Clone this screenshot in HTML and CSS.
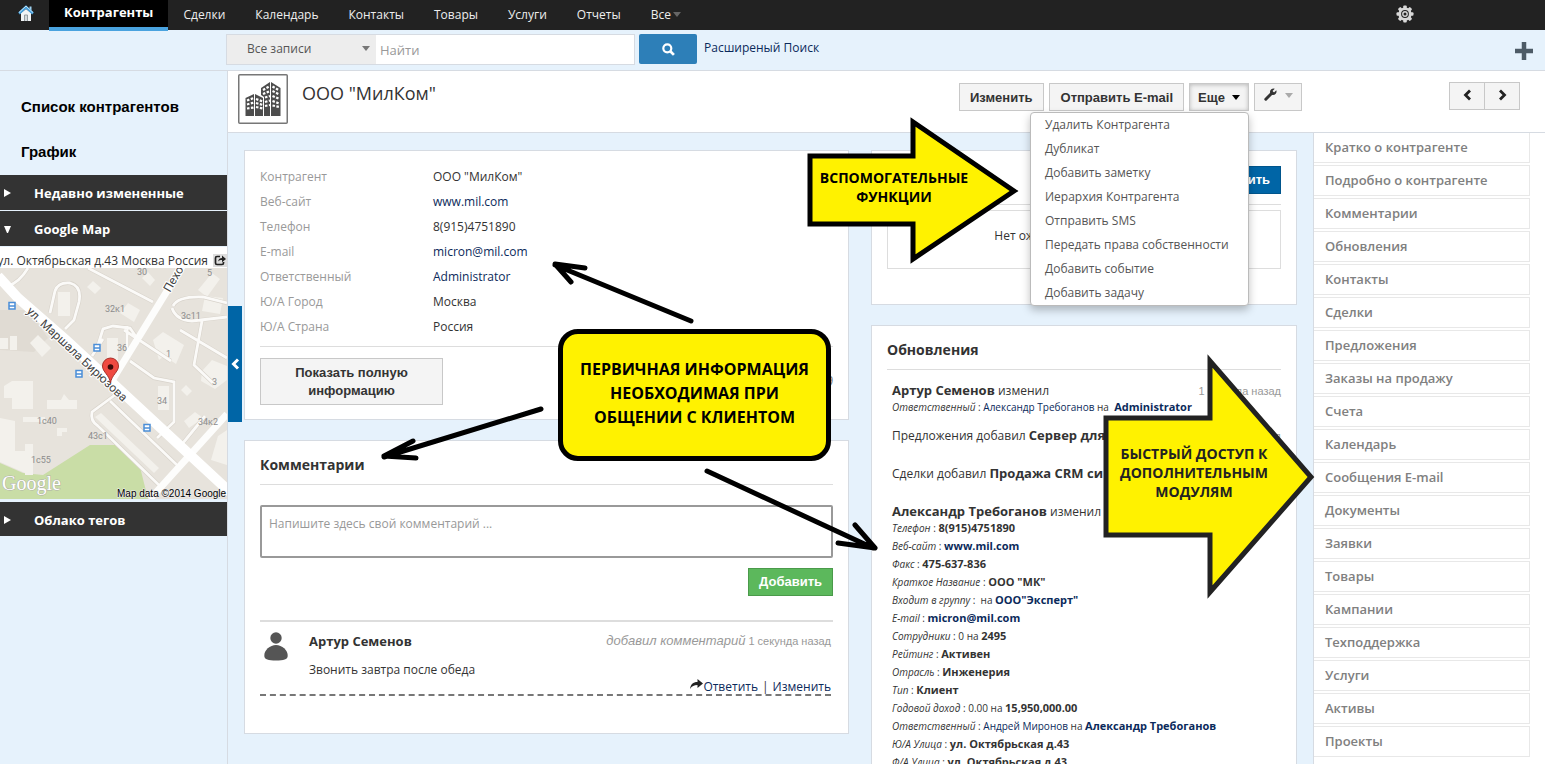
FILE: index.html
```html
<!DOCTYPE html>
<html lang="ru">
<head>
<meta charset="utf-8">
<title>ООО "МилКом"</title>
<link rel="stylesheet" href="styles.css">
</head>
<body>
<nav class="topnav">
  <a class="home" href="#" aria-label="Главная"><svg width="16" height="17" viewBox="0 0 16 17"><path d="M3 8v8h10V8L8 4z" fill="#f1f4f6"/><path d="M11.500 1.500h2v4h-2z" fill="#9ed0ee"/><path d="M1 8.500l7-6.500 7 6.500" fill="none" stroke="#4aa3df" stroke-width="2.400"/><path d="M1 7.500l7-6.500 7 6.500" fill="none" stroke="#bfe2f7" stroke-width="1"/><path d="M6.500 16v-6h3v6" fill="#d5dadd" stroke="#8b949a" stroke-width=".9"/></svg></a>
  <a class="active" href="#">Контрагенты</a>
  <a href="#">Сделки</a><a href="#">Календарь</a><a href="#">Контакты</a><a href="#">Товары</a><a href="#">Услуги</a><a href="#">Отчеты</a>
  <a href="#">Все<i class="caret dim"></i></a>
  <button class="gear" aria-label="Настройки"><svg width="18" height="18" viewBox="-9 -9 18 18"><g fill="#d8d8d8"><rect x="-1.800" y="-8.500" width="3.600" height="17" rx="1"/><rect x="-8.500" y="-1.800" width="17" height="3.600" rx="1"/><rect x="-1.800" y="-8.500" width="3.600" height="17" rx="1" transform="rotate(45)"/><rect x="-1.800" y="-8.500" width="3.600" height="17" rx="1" transform="rotate(-45)"/><circle r="6.600"/></g><circle r="3.900" fill="#222"/><circle r="2.900" fill="#d8d8d8"/><circle r="1.500" fill="#222"/></svg></button>
</nav>
<form class="search">
  <label class="scope"><select aria-label="Область поиска"><option>Все записи</option></select><i class="caret"></i></label>
  <input type="text" placeholder="Найти" aria-label="Найти">
  <button type="button" class="find" aria-label="Искать"><svg width="13" height="13" viewBox="0 0 13 13" fill="none" stroke="#fff"><circle cx="5.300" cy="5.300" r="4" stroke-width="2.200"/><path d="M8.300 8.300l3.600 3.600" stroke-width="2.700"/></svg></button>
  <a href="#">Расширеный Поиск</a>
  <button type="button" class="plus" aria-label="Создать"><svg width="18" height="18" viewBox="0 0 18 18"><path d="M9 0v18M0 9h18" stroke="#4d5b66" stroke-width="4.500"/></svg></button>
</form>
<div class="layout">
  <aside class="sidebar">
    <a class="quick" href="#">Список контрагентов</a>
    <a class="quick" href="#">График</a>
    <button class="fold"><i class="tri"></i>Недавно измененные</button>
    <button class="fold"><i class="tri down"></i>Google Map</button>
    <div class="address"><span>ул. Октябрьская д.43 Москва Россия</span><svg width="14" height="13" viewBox="0 0 14 13"><rect width="14" height="13" fill="#ddd"/><path d="M7 2.500H4Q2.500 2.500 2.500 4v5q0 1.500 1.500 1.500h5q1.500 0 1.500-1.500V8" fill="none" stroke="#222" stroke-width="1.700"/><path d="M5 7.500C5.500 5 7 4 9 4V1.500L13 5 9 8.200V6C7.500 6 6 6.300 5 7.500z" fill="#222"/></svg></div>
    <svg class="map" viewBox="0 0 227 231" preserveAspectRatio="xMidYMid slice">
      <rect width="227" height="231" fill="#e7e3dc"/>
      <path d="M0 42h28l20 28-14 14L0 82z" fill="#e0dbd3"/>
      <path d="M0 195l23 10 20 2 47-30h25l25 22 8 32H0z" fill="#c9dda6"/>
      <g fill="#f3f1ec">
        <path d="M58 24h12v24H58zM87 19l6-6 8 7-6 6zM120 45l8-10 12 7-6 12zM142 10l6-6 7 8-5 6zM198 22l14-17 8 6-13 18zM205 28l18 2-3 16-18-3z"/>
        <path d="M107 70h11v24h-11zM30 75l8-8 13 13-9 9zM10 68h7v14h-7zM0 70h8v11H0zM4 118l8-5h21v28H12v-11H4zM47 132h14l3-6 5 6h8v9H47zM23 149h22v5H23zM57 160h10v4h-5v4h-5zM0 150l15 3v30h10v22L0 194zM25 176h8v31h-8z"/>
        <path d="M153 72l10-8 21 13-8 19-12-8-5 4zM202 103l10-11 15 6v14l-12 9-14-8zM158 118h11v24h-11zM181 122l5-5 6 6-5 5zM184 153l11-9 8 6-14 10zM95 149l6-4 58 55-5 5zM218 168l9-6v35l-16-5z"/>
      </g>
      <g fill="none" stroke="#d8d3cb" stroke-width="4">
        <path d="M28 0C22 10 14 16 8 18M50 45l5-22q3-9 15-8 12 3 9 19l-5 18-9 9M88 0l65 34M98 77l5-16 10-3 17 2 9 13M127 58v34M92 88l11-17M130 93l24 17 20 4v40l-17 16M227 90l-47-28M172 40q4 12 20 13l35-4M173 38q5-10 30-9l24 6M202 53l-8 44 20 19M124 62l47 31"/>
        <path d="M119 124l-27 20q-2 9 6 14l64 62M110 133l67 64M183 175l22-27"/>
      </g>
      <g fill="none" stroke="#fbfaf8" stroke-width="2.800">
        <path d="M28 0C22 10 14 16 8 18M50 45l5-22q3-9 15-8 12 3 9 19l-5 18-9 9M88 0l65 34M98 77l5-16 10-3 17 2 9 13M127 58v34M92 88l11-17M130 93l24 17 20 4v40l-17 16M227 90l-47-28M172 40q4 12 20 13l35-4M173 38q5-10 30-9l24 6M202 53l-8 44 20 19M124 62l47 31"/>
        <path d="M119 124l-27 20q-2 9 6 14l64 62M110 133l67 64M183 175l22-27"/>
      </g>
      <path d="M183-3L137 72l-24 39M227 146l-67 74-10 11" fill="none" stroke="#fdfdfc" stroke-width="7"/>
      <path d="M-2 8l20 22 48 42 124 115 40 37" fill="none" stroke="#fff" stroke-width="10"/>
      <g fill="#fff" stroke="#4b8ed8" stroke-width="1.500"><path d="M9 34.500h6v6.500H9zM94 76.500h6V83h-6zM76 102.500h6v6.500h-6zM144 156.500h6v6.500h-6z"/><path d="M9 38h6M94 80h6M76 106h6M144 160h6"/></g>
      <g class="houses"><text x="137" y="7">30</text><text x="207" y="8">5</text><text x="105" y="44">32к1</text><text x="181" y="51">3с11</text><text x="117" y="83">36</text><text x="166" y="89">1</text><text x="212" y="117">3</text><text x="157" y="136">34</text><text x="198" y="157">34к2</text><text x="37" y="156">1с40</text><text x="88" y="171">43с1</text><text x="31" y="195">1с55</text></g>
      <text class="street" transform="translate(26 44) rotate(43)">ул. Маршала Бирюзова</text>
      <text class="street" transform="translate(170 25) rotate(-60)">Пехо</text>
      <path d="M110.500 115c-1-8-8-11-8-17a8 8 0 0 1 16 0c0 6-7 9-8 17z" fill="#ef4a41" stroke="#a8322b"/><circle cx="110.500" cy="99" r="2.800" fill="#3d0b09"/>
      <text class="glogo" x="2" y="222">Google</text>
      <text class="credit" x="117" y="229">Map data ©2014 Google</text>
    </svg>
    <button class="fold last"><i class="tri"></i>Облако тегов</button>
  </aside>
  <div class="page">
    <button class="toggle" aria-label="Свернуть"><svg width="9" height="12" viewBox="0 0 9 12"><path d="M7 1.500L2.500 6 7 10.500" fill="none" stroke="#fff" stroke-width="3"/></svg></button>
    <header class="record">
      <svg class="logo" width="50" height="50" viewBox="0 0 50 50"><rect x=".75" y=".75" width="48.500" height="48.500" rx="1" fill="#fff" stroke="#777" stroke-width="1.500"/><g fill="#4d4d4d"><path d="M7.500 24l8.500-4v22H7.500zM17 20l8 4v18h-8zM23 14l9-6v34h-6V23l-3-2zM33 8l9.500 6v28H33z"/></g><g fill="none" stroke="#fff" stroke-width="2.200" stroke-dasharray="2.500 1.500"><path d="M9 26.500l7-2.500M9 30.500l7-2M9 34.500l7-1M18 25l7 2.500M18 29l7 2M18 33l7 1.500M25 16l7-4M25 20l7-3M27 23.500l5-1.500M27 28l5-1.500M27 32l5-1M34.500 12.500l7 4M34.500 17l7 3.500M34.500 22l7 3M34.500 27l7 2.500M34.500 31.500l7 1.500"/></g></svg>
      <h1>ООО "МилКом"</h1>
      <div class="actions">
        <button class="btn">Изменить</button>
        <button class="btn">Отправить E-mail</button>
        <div class="more">
          <button class="btn pressed">Еще<i class="caret"></i></button>
          <ul class="menu"><li><a href="#">Удалить Контрагента</a></li><li><a href="#">Дубликат</a></li><li><a href="#">Добавить заметку</a></li><li><a href="#">Иерархия Контрагента</a></li><li><a href="#">Отправить SMS</a></li><li><a href="#">Передать права собственности</a></li><li><a href="#">Добавить событие</a></li><li><a href="#">Добавить задачу</a></li></ul>
        </div>
        <button class="btn tool" aria-label="Инструменты"><svg width="13" height="13" viewBox="0 0 13 13"><path d="M1.800 11.200L8 5" stroke="#333" stroke-width="3" stroke-linecap="round"/><path d="M12.300 2.200L10 4.500 8.500 3 10.800.7A3.600 3.600 0 0 0 6 4.600L8.400 7a3.600 3.600 0 0 0 3.900-4.800z" fill="#333"/></svg><i class="caret dim"></i></button>
      </div>
      <div class="pager"><button aria-label="Назад"><svg width="9" height="12" viewBox="0 0 9 12"><path d="M7 1.500L2.500 6 7 10.500" fill="none" stroke="#222" stroke-width="2.800"/></svg></button><button aria-label="Вперед"><svg width="9" height="12" viewBox="0 0 9 12"><path d="M2 1.500L6.500 6 2 10.500" fill="none" stroke="#222" stroke-width="2.800"/></svg></button></div>
    </header>
    <div class="body">
      <main class="content">
        <div class="col">
          <section class="panel summary">
            <dl><dt>Контрагент</dt><dd>ООО "МилКом"</dd><dt>Веб-сайт</dt><dd><a href="#">www.mil.com</a></dd><dt>Телефон</dt><dd>8(915)4751890</dd><dt>E-mail</dt><dd><a href="#">micron@mil.com</a></dd><dt>Ответственный</dt><dd><a href="#">Administrator</a></dd><dt>Ю/А Город</dt><dd>Москва</dd><dt>Ю/А Страна</dt><dd>Россия</dd></dl>
            <div class="full"><button class="btn">Показать полную информацию</button><em>д</em></div>
          </section>
          <section class="panel comments">
            <h2>Комментарии</h2>
            <textarea placeholder="Напишите здесь свой комментарий ..." aria-label="Комментарий"></textarea>
            <div class="submit"><button class="add">Добавить</button></div>
            <article class="comment">
              <svg width="24" height="29" viewBox="0 0 24 29" fill="#555"><circle cx="12" cy="6" r="5.700"/><path d="M12 13c6 0 12 5 11.700 11-.2 3.500-4 4.500-11.700 4.500S.5 27.500.3 24C0 18 6 13 12 13z"/></svg>
              <div class="text"><div class="line"><b>Артур Семенов</b><span class="when"><em>добавил комментарий</em> 1 секунда назад</span></div>
              <p>Звонить завтра после обеда</p></div>
            </article>
            <div class="reply"><svg width="13" height="10" viewBox="0 0 13 10"><path d="M0 10C.5 5.500 3 3 7.500 3V0L13 4.500 7.500 9V6C4 6 2 7 0 10z" fill="#222"/></svg><a href="#">Ответить</a><span>|</span><a href="#">Изменить</a></div>
          </section>
        </div>
        <div class="col">
          <section class="panel events">
            <div class="bar"><button class="primary">Добавить</button></div>
            <p class="empty">Нет ожидающих мероприятий</p>
          </section>
          <section class="panel updates">
            <h2>Обновления</h2>
            <ul>
              <li><div class="line"><span><b>Артур Семенов</b> изменил</span><time>1 секунда назад</time></div>
                <p><i>Ответственный</i> : <a href="#">Александр Требоганов</a> на &nbsp;<a href="#"><b>Administrator</b></a></p></li>
              <li><div class="line"><span>Предложения добавил <b>Сервер для</b></span><time>назад</time></div></li>
              <li><div class="line"><span>Сделки добавил <b>Продажа CRM си</b></span></div></li>
              <li><div class="line"><span><b>Александр Требоганов</b> изменил</span></div>
                <p><i>Телефон</i> : <b>8(915)4751890</b></p>
                <p><i>Веб-сайт</i> : <a href="#"><b>www.mil.com</b></a></p>
                <p><i>Факс</i> : <b>475-637-836</b></p>
                <p><i>Краткое Название</i> : <b>ООО "МК"</b></p>
                <p><i>Входит в группу</i> : &nbsp;на <a href="#"><b>ООО"Эксперт"</b></a></p>
                <p><i>E-mail</i> : <a href="#"><b>micron@mil.com</b></a></p>
                <p><i>Сотрудники</i> : 0 на <b>2495</b></p>
                <p><i>Рейтинг</i> : <b>Активен</b></p>
                <p><i>Отрасль</i> : <b>Инженерия</b></p>
                <p><i>Тип</i> : <b>Клиент</b></p>
                <p><i>Годовой доход</i> : 0.00 на <b>15,950,000.00</b></p>
                <p><i>Ответственный</i> : <a href="#">Андрей Миронов</a> на <a href="#"><b>Александр Требоганов</b></a></p>
                <p><i>Ю/А Улица</i> : <b>ул. Октябрьская д.43</b></p>
                <p><i>Ф/А Улица</i> : <b>ул. Октябрьская д.43</b></p></li>
            </ul>
          </section>
        </div>
      </main>
      <nav class="related"><a href="#">Кратко о контрагенте</a><a href="#">Подробно о контрагенте</a><a href="#">Комментарии</a><a href="#">Обновления</a><a href="#">Контакты</a><a href="#">Сделки</a><a href="#">Предложения</a><a href="#">Заказы на продажу</a><a href="#">Счета</a><a href="#">Календарь</a><a href="#">Сообщения E-mail</a><a href="#">Документы</a><a href="#">Заявки</a><a href="#">Товары</a><a href="#">Кампании</a><a href="#">Техподдержка</a><a href="#">Услуги</a><a href="#">Активы</a><a href="#">Проекты</a></nav>
    </div>
  </div>
</div>
<svg class="pointers" width="1545" height="764" viewBox="0 0 1545 764">
  <g fill="none" stroke="#000" stroke-width="5" stroke-linecap="round" stroke-linejoin="round"><path d="M691 321L555 265M585 268l-30-4 16 18M541 409L384 457M413 441l-29 15 32 2M707 471l166 77M855 525l20 23-37-5"/></g>
  <path d="M810 156h103v-34l101 69-101 68v-35H810z" fill="#fff200" stroke="#000" stroke-width="5"/>
  <path d="M1106 418h104v-57l101 116-101 115v-57h-104z" fill="#fff200" stroke="#222" stroke-width="5"/>
</svg>
<div class="note helpers">ВСПОМОГАТЕЛЬНЫЕ ФУНКЦИИ</div>
<div class="note primary-info">ПЕРВИЧНАЯ ИНФОРМАЦИЯ НЕОБХОДИМАЯ ПРИ ОБЩЕНИИ С КЛИЕНТОМ</div>
<div class="note modules">БЫСТРЫЙ ДОСТУП К ДОПОЛНИТЕЛЬНЫМ <span>МОДУЛЯМ</span></div>
</body>
</html>
```
FILE: styles.css
```css
* { box-sizing: border-box; }
body {
  margin: 0;
  height: 100vh;
  overflow: hidden;
  position: relative;
  display: flex;
  flex-direction: column;
  background: #e6f2fc;
  color: #333;
  font: 12px/18px "Open Sans", "Noto Sans", sans-serif;
}
a { color: #0b2a5b; text-decoration: none; }
button { font: inherit; cursor: pointer; }
h1, h2, p, ul, dl, dd { margin: 0; padding: 0; }
ul { list-style: none; }
svg { flex: none; }

.caret { display: inline-block; border: 4px solid transparent; border-top: 5px solid #000; border-bottom: 0; }
.caret.dim { border-top-color: #777; }

.topnav { display: flex; flex: none; height: 30px; background: #222; }
.topnav a { padding: 6px 15px 0; color: #eee; }
.topnav .home { width: 49px; padding: 5px 0 0 18px; }
.topnav .active { height: 31px; padding-top: 3px; background: #000; border-bottom: 4px solid #4aa3df; color: #fff; font-weight: 700; font-size: 13px; }
.topnav .caret { margin-left: 2px; vertical-align: 2px; }
.topnav .caret.dim { border-top-color: #666; }
.gear { display: flex; align-items: center; margin: 0 131px 2px auto; padding: 0; border: 0; background: none; }

.search { display: flex; flex: none; height: 41px; padding: 4px 12px 0 226px; border-bottom: 1px solid #d6dbe2; margin: 0; align-items: flex-start; }
.scope { position: relative; width: 150px; }
.scope select { appearance: none; width: 100%; height: 31px; padding: 0 20px 2px; background: #ededed; border: 1px solid #d6dbe2; border-right: 0; border-radius: 0; color: #555; font: inherit; }
.scope .caret { position: absolute; right: 6px; top: 12px; border-top-color: #777; }
.search input { width: 259px; height: 31px; padding: 0 4px; border: 1px solid #d6dbe2; border-left: 0; font: inherit; font-size: 13px; }
::placeholder { color: #999; opacity: 1; }
.find { display: flex; align-items: center; justify-content: center; width: 58px; height: 30px; margin: 0 7px 0 4px; border: 0; border-radius: 2px; background: #2d7fb8; }
.search a { padding-top: 5px; }
.plus { display: flex; margin: 8px 0 0 auto; padding: 0; border: 0; background: none; }

.layout { display: flex; flex: 1; min-height: 0; }
.sidebar { width: 228px; flex: none; border-right: 1px solid #d6dbe2; padding-top: 14px; }
.quick { display: block; padding: 13px 21px 14px; color: #000; font: bold 15px/18px "Liberation Sans", Arial, sans-serif; }
.fold { display: flex; align-items: center; width: 100%; height: 35px; margin: 0 0 1px; padding: 1px 0 0 4px; border: 0; background: #333; color: #fff; font-weight: 700; font-size: 13px; }
.fold.last { height: 34px; margin-top: 3px; }
.tri { width: 7px; margin-right: 23px; border: 4px solid transparent; border-left: 7px solid #fff; border-right: 0; }
.tri.down { border: 3px solid transparent; border-top: 7px solid #fff; border-bottom: 0; }
.address { display: flex; align-items: center; justify-content: flex-end; gap: 5px; height: 21px; background: #fff; white-space: nowrap; padding-top: 6px; }
.map { display: block; width: 100%; height: 231px; }
.houses text { font: 9px Roboto, sans-serif; fill: #8c8c8c; }
.street { font: 12px Roboto, sans-serif; fill: #444; stroke: #fff; stroke-width: 2px; paint-order: stroke; }
.glogo { font: 20px "Liberation Serif", serif; fill: #fff; stroke: #b0b0a8; stroke-width: 1px; paint-order: stroke; }
.credit { font: 10px "Liberation Sans", sans-serif; fill: #000; stroke: #eee; stroke-width: 1px; paint-order: stroke; }

.page { position: relative; flex: 1; min-width: 0; display: flex; flex-direction: column; }
.toggle { position: absolute; left: 0; top: 235px; width: 14px; height: 116px; padding: 0; border: 0; background: #0065a6; z-index: 1; display: flex; align-items: center; justify-content: center; }
.record { display: flex; flex: none; align-items: flex-start; height: 62px; padding: 3px 25px 0 10px; background: #fff; border-bottom: 1px solid #d6dbe2; }
.record h1 { margin: 6px auto 0 14px; font-size: 18px; line-height: 26px; font-weight: 400; }
.actions { display: flex; gap: 5px; margin: 9px 147px 0 0; }
.btn { height: 28px; padding: 1px 10px 0; border: 1px solid #c8c8c8; background: #f4f4f4; color: #333; font: bold 13px/18px "Liberation Sans", Arial, sans-serif; }
.actions > .btn:nth-child(2) { padding-left: 11px; }
.actions .pressed { width: 60px; padding: 1px 8px 0; box-shadow: inset 0 1px 4px #bbb; white-space: nowrap; }
.pressed .caret { margin-left: 7px; vertical-align: 2px; }
.actions .tool { width: 48px; padding: 0; }
.tool .caret.dim { margin-left: 8px; vertical-align: 3px; border-top-color: #aaa; }
.more { position: relative; }
.menu { position: absolute; right: 0; top: 29px; width: 219px; background: #fff; border: 1px solid #bbb; border-radius: 4px; box-shadow: 0 4px 8px rgba(0, 0, 0, .25); z-index: 5; }
.menu a { display: block; padding: 3px 14px; color: #555; white-space: nowrap; }
.pager { display: flex; margin-top: 8px; }
.pager button { width: 36px; height: 28px; padding: 2px 0 0; background: #f4f4f4; border: 1px solid #c8c8c8; }
.pager button + button { margin-left: -1px; }

.body { display: flex; flex: 1; min-height: 0; }
.content { flex: 1; display: grid; grid-template-columns: 605fr 426fr; gap: 22px; padding: 17px 16px 0; align-items: start; }
.col { display: flex; flex-direction: column; gap: 20px; min-width: 0; }
.panel { background: #fff; border: 1px solid #d6dbe2; padding: 15px; }
h2 { font-size: 14px; line-height: 18px; font-weight: 700; }

.summary { height: 270px; padding-top: 13px; }
.summary dl { display: grid; grid-template-columns: 173px 1fr; grid-auto-rows: 25px; align-items: center; padding-bottom: 7px; border-bottom: 1px solid #ddd; }
.summary dt { color: #999; }
.full { display: flex; align-items: center; justify-content: space-between; margin-top: 11px; }
.full .btn { width: 183px; height: 47px; padding: 0 30px; }
.full em { color: #777; }

.comments { height: 294px; }
.comments h2, .updates h2 { padding-bottom: 10px; border-bottom: 1px solid #ddd; }
.comments textarea { display: block; width: 100%; height: 53px; margin: 20px 0 10px; padding: 8px 7px; border: 2px solid #999; border-radius: 2px; resize: none; font: inherit; }
.submit { text-align: right; }
.add, .primary { height: 28px; padding: 0 10px; background: #5cb85c; border: 1px solid #4a9a4a; color: #fff; font: bold 13px/18px "Liberation Sans", Arial, sans-serif; }
.comment { display: flex; gap: 21px; margin-top: 24px; padding: 10px 2px 0 4px; border-top: 2px solid #ddd; }
.text { flex: 1; }
.line { display: flex; justify-content: space-between; }
.line b { font-size: 13px; }
.when { color: #999; font: 11px/18px "Liberation Sans", Arial, sans-serif; }
.when em { font-size: 13px; }
.comment p { margin-top: 11px; }
.reply { display: flex; justify-content: flex-end; height: 17px; margin: 0 2px 0 0; border-bottom: 2px dashed #777; line-height: 16px; }
.reply span { margin: 0 4px; }

.events { height: 155px; }
.bar { text-align: right; padding-bottom: 10px; border-bottom: 1px solid #ddd; }
.primary { display: block; margin-left: auto; background: #0065a6; border-color: #00558c; }
.empty { height: 59px; margin-top: 5px; padding-top: 16px; border: 1px solid #ddd; text-align: center; }

.updates ul { padding-left: 5px; }
.updates li { padding: 11px 0; }
.updates li:first-child { padding: 12px 0 0; }
.updates .line { height: 16px; line-height: 16px; }
.updates p { font-size: 10px; line-height: 18px; }
.updates p b { font-size: 11px; }
time { color: #999; font: 11px/18px "Liberation Sans", Arial, sans-serif; }

.related { width: 232px; flex: none; padding-right: 15px; background: #fff; border-left: 1px solid #d6dbe2; overflow: hidden; }
.related a { display: block; height: 31px; margin-bottom: 2px; padding: 4px 11px; border: 1px solid #e8e8e8; border-left: 0; color: #808080; font-weight: 600; font-size: 13px; line-height: 20px; }
.related a:first-child { border-top: 0; height: 30px; }

.pointers { position: absolute; left: 0; top: 0; z-index: 10; pointer-events: none; }
.note { position: absolute; z-index: 11; color: #000; font-weight: 700; text-align: center; }
.helpers { left: 809px; top: 168px; width: 170px; padding: 0 8px; font-size: 14px; line-height: 19px; }
.primary-info { left: 558px; top: 329px; width: 273px; height: 132px; padding: 23px 10px; border: 5px solid #000; border-radius: 20px; background: #fff200; font-size: 16px; line-height: 24px; }
.modules { left: 1112px; top: 444px; width: 164px; font-size: 14px; line-height: 19px; color: #222; }
```
